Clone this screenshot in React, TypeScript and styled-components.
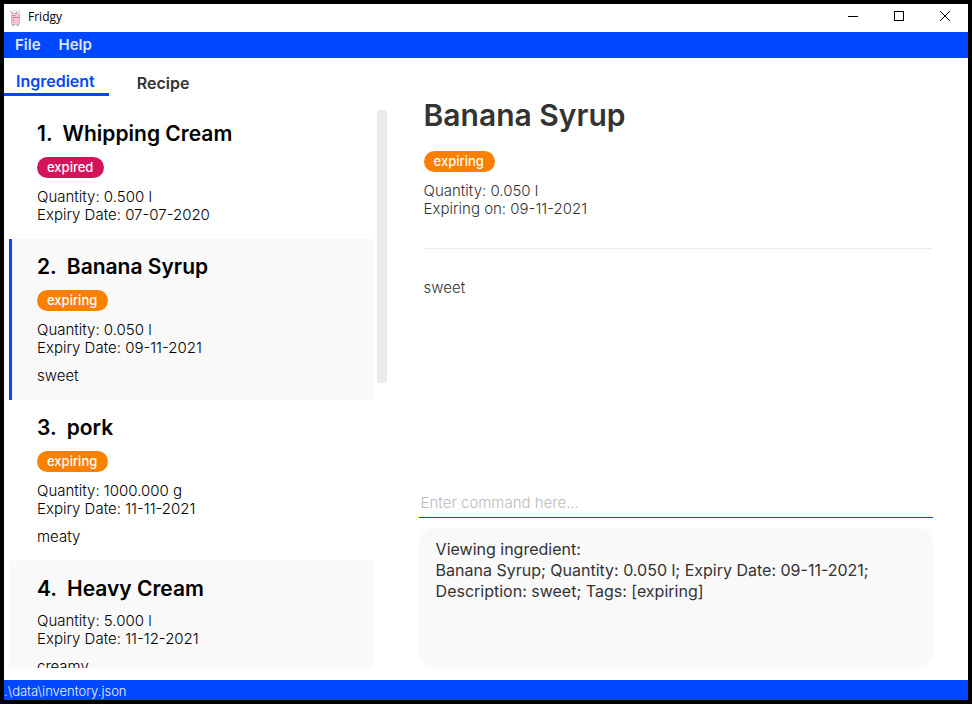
import React, { useState } from "react";
import styled, { createGlobalStyle } from "styled-components";

const blue = "#0048ff";
const sans = `Inter, "Open Sans", sans-serif`;

const GlobalStyle = createGlobalStyle`
  * { box-sizing: border-box; }
  html, body, #root { height: 100%; margin: 0; }
  body { background: #000; font-family: ${sans}; }
  h1, h2, p, ol { margin: 0; padding: 0; }
  button, input { font-family: inherit; border: 0; background: none; padding: 0; margin: 0; }
`;

const Window = styled.div`
  height: 100%;
  border: 4px solid #000;
  background: #fff;
  display: flex;
  flex-direction: column;
  overflow: hidden;
`;

const TitleBar = styled.header`
  flex: none;
  height: 28px;
  display: flex;
  align-items: center;
  padding-left: 6px;
`;

const AppName = styled.span`
  flex: 1;
  margin-left: 7px;
  padding-bottom: 2px;
  font: 12px/20px "Open Sans", "Noto Sans", sans-serif;
  color: #000;
`;

const WindowButton = styled.button`
  width: 46px;
  height: 28px;
  display: flex;
  align-items: center;
  justify-content: center;
  padding-bottom: 4px;
`;

const MenuBar = styled.nav`
  flex: none;
  height: 26px;
  display: flex;
  gap: 18px;
  padding: 0 11px;
  background: ${blue};
`;

const MenuButton = styled.button`
  font-size: 15px;
  line-height: 26px;
  font-weight: 600;
  color: #dde6ff;
`;

const Main = styled.main`
  flex: 1;
  min-height: 0;
  display: grid;
  grid-template-columns: 40% minmax(0, 1fr);
`;

const Sidebar = styled.section`
  min-height: 0;
  display: flex;
  flex-direction: column;
  padding-bottom: 12px;
`;

const Tabs = styled.div`
  flex: none;
  display: flex;
  height: 38px;
`;

const Tab = styled.button<{ $active?: boolean }>`
  font-size: 16px;
  line-height: 20px;
  font-weight: 600;
  padding: ${(p) => (p.$active ? "13px 14px 2px 12px" : "15px 28px 3px")};
  color: ${(p) => (p.$active ? blue : "#333")};
  border-bottom: ${(p) => (p.$active ? `3px solid ${blue}` : "0")};
`;

const ListArea = styled.div`
  flex: 1;
  min-height: 0;
  display: flex;
  gap: 3px;
  margin-top: 10px;
  padding: 0 3px 0 5px;
`;

const List = styled.ol`
  flex: 1;
  min-width: 0;
  overflow: hidden;
  list-style: none;
`;

const Item = styled.li<{ $selected?: boolean }>`
  padding: 15px 15px 15px 25px;
  border-left: 3px solid ${(p) => (p.$selected ? blue : "transparent")};
  background: #fff;
  &:nth-child(even) { background-color: #f9f9f9; }
`;

const ItemTitle = styled.h2`
  display: flex;
  gap: 10px;
  margin-bottom: 10px;
  font-size: 21px;
  line-height: 26px;
  font-weight: 600;
  color: #000;
`;

const Badge = styled.span<{ $kind: string }>`
  display: block;
  width: fit-content;
  margin-bottom: 10px;
  padding: 0 11px 0 10px;
  border-radius: 11px;
  font-size: 13px;
  line-height: 21px;
  font-weight: 500;
  color: #fff;
  background: ${(p) => (p.$kind === "expired" ? "#d4145a" : "#f98000")};
`;

const Text = styled.p`
  font-size: 15px;
  line-height: 18px;
  font-weight: 300;
  color: inherit;
`;

const Description = styled(Text)`
  margin-top: 10px;
`;

const Scrollbar = styled.div`
  flex: none;
  width: 10px;
  padding-top: 4px;
`;

const Thumb = styled.div`
  height: 49%;
  border-radius: 3px;
  background: #eaeaea;
`;

const Detail = styled.section`
  min-height: 0;
  display: flex;
  flex-direction: column;
  padding: 38px 35px 12px 29px;
  color: #333;
`;

const Card = styled.article`
  flex: 1;
  min-height: 0;
  padding: 0 1px 0 5px;
`;

const DetailTitle = styled.h1`
  margin-bottom: 17px;
  font-size: 30px;
  line-height: 38px;
  font-weight: 600;
`;

const Rule = styled.hr`
  margin: 30px 0 30px;
  border: 0;
  height: 1px;
  background: #e9ebf6;
`;

const Command = styled.input`
  flex: none;
  width: 100%;
  height: 30px;
  padding: 0 2px;
  border-bottom: 1px solid ${blue};
  font-size: 15px;
  font-weight: 300;
  color: #333;
  outline: 0;
  &::placeholder { color: #bbb; opacity: 1; }
`;

const Result = styled.output`
  flex: none;
  display: block;
  height: 140px;
  margin-top: 10px;
  padding: 11px 17px;
  border-radius: 15px;
  background: #f9f9f9;
  font-size: 16px;
  line-height: 21px;
  white-space: pre-line;
`;

const StatusBar = styled.footer`
  flex: none;
  height: 20px;
  overflow: hidden;
  background: ${blue};
  color: #eef2ff;
  font-size: 13px;
  line-height: 22px;
  font-weight: 300;
`;

const FridgeIcon = () => (
  <svg width="11" height="16" viewBox="0 0 11 16" aria-hidden="true">
    <path d="M0 1.5h2M3 .5h2M6 1.5h1M8 .5h2M1 2.5h2M5 2.5h3M9 2.5h1" stroke="#c4c4c4" />
    <rect x="1.500" y="3.500" width="8" height="11" rx="1" fill="#f9c5d1" stroke="#d2b4bf" />
    <path d="M2 7.500h7M2.500 5.500h3M3.500 9v2" stroke="#b391a3" />
    <path d="M2 15.500h2M7 15.500h2" stroke="#aaa" />
  </svg>
);

type Ingredient = {
  name: string;
  quantity: string;
  expiry: string;
  tag?: string;
  description?: string;
};

const ingredients: Ingredient[] = [
  { name: "Whipping Cream", quantity: "0.500 l", expiry: "07-07-2020", tag: "expired" },
  { name: "Banana Syrup", quantity: "0.050 l", expiry: "09-11-2021", tag: "expiring", description: "sweet" },
  { name: "pork", quantity: "1000.000 g", expiry: "11-11-2021", tag: "expiring", description: "meaty" },
  { name: "Heavy Cream", quantity: "5.000 l", expiry: "11-12-2021", description: "creamy" },
];

export default function App() {
  const [command, setCommand] = useState("");
  const current = ingredients[1];
  return (
    <>
      <GlobalStyle />
      <Window>
        <TitleBar>
          <FridgeIcon />
          <AppName>Fridgy</AppName>
          <WindowButton aria-label="Minimize">
            <svg width="10" height="10"><path d="M0 5.500h10" stroke="#000" /></svg>
          </WindowButton>
          <WindowButton aria-label="Maximize">
            <svg width="10" height="10"><rect x=".5" y=".5" width="9" height="9" fill="none" stroke="#000" /></svg>
          </WindowButton>
          <WindowButton aria-label="Close">
            <svg width="10" height="10"><path d="M0 0l10 10M10 0L0 10" stroke="#000" /></svg>
          </WindowButton>
        </TitleBar>
        <MenuBar>
          <MenuButton>File</MenuButton>
          <MenuButton>Help</MenuButton>
        </MenuBar>
        <Main>
          <Sidebar>
            <Tabs role="tablist">
              <Tab role="tab" aria-selected="true" $active>Ingredient</Tab>
              <Tab role="tab" aria-selected="false">Recipe</Tab>
            </Tabs>
            <ListArea>
              <List>
                {ingredients.map((item, i) => (
                  <Item key={item.name} $selected={item === current}>
                    <ItemTitle>
                      <span>{i + 1}.</span>
                      <span>{item.name}</span>
                    </ItemTitle>
                    {item.tag && <Badge $kind={item.tag}>{item.tag}</Badge>}
                    <Text>Quantity: {item.quantity}</Text>
                    <Text>Expiry Date: {item.expiry}</Text>
                    {item.description && <Description>{item.description}</Description>}
                  </Item>
                ))}
              </List>
              <Scrollbar><Thumb /></Scrollbar>
            </ListArea>
          </Sidebar>
          <Detail>
            <Card>
              <DetailTitle>{current.name}</DetailTitle>
              <Badge $kind="expiring">expiring</Badge>
              <Text>Quantity: {current.quantity}</Text>
              <Text>Expiring on: {current.expiry}</Text>
              <Rule />
              <Text>{current.description}</Text>
            </Card>
            <Command
              aria-label="Command"
              placeholder="Enter command here..."
              value={command}
              onChange={(e) => setCommand(e.target.value)}
            />
            <Result>
              {"Viewing ingredient:\nBanana Syrup; Quantity: 0.050 l; Expiry Date: 09-11-2021; Description: sweet; Tags: [expiring]"}
            </Result>
          </Detail>
        </Main>
        <StatusBar>.\data\inventory.json</StatusBar>
      </Window>
    </>
  );
}
